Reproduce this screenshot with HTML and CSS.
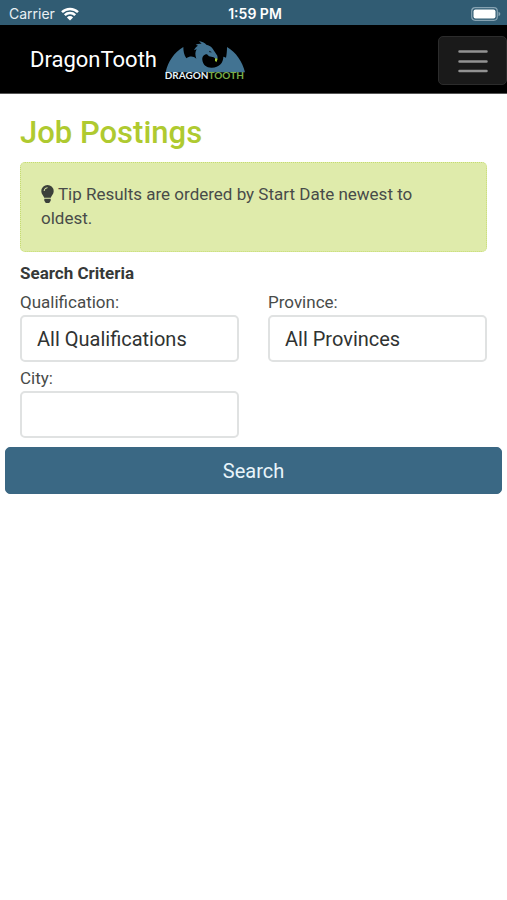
FILE: index.html
```html
<!DOCTYPE html>
<html lang="en">
<head>
<meta charset="utf-8">
<meta name="viewport" content="width=device-width, initial-scale=1">
<title>DragonTooth - Job Postings</title>
<link rel="stylesheet" href="styles.css">
</head>
<body>
<div class="status">
  <div class="carrier">
    <span>Carrier</span>
    <svg class="wifi" viewBox="0 0 18 14" aria-hidden="true">
      <path d="M1 5.200a11.400 11.400 0 0 1 16 0M3.800 8.200a7.400 7.400 0 0 1 10.400 0" fill="none" stroke="currentColor" stroke-width="2.500"/>
      <path d="M9 13.500 5.900 10.400a4.400 4.400 0 0 1 6.200 0z" fill="currentColor"/>
    </svg>
  </div>
  <span class="clock">1:59 PM</span>
  <svg class="battery" viewBox="0 0 30 14" aria-hidden="true">
    <rect x=".7" y=".7" width="25.600" height="12.600" rx="3.500" fill="none" stroke="#87a3b2" stroke-width="1.200"/>
    <rect x="2.500" y="2.500" width="22" height="9" rx="2" fill="#fff"/>
    <path d="M27.500 4.800c2.400.8 2.400 3.600 0 4.400z" fill="#87a3b2"/>
  </svg>
</div>
<header class="navbar">
  <a class="brand" href="#">
    <span>DragonTooth</span>
    <svg class="logo" viewBox="15 12 240 126" role="img" aria-label="DragonTooth logo">
      <path fill="#427392" d="M17 112C24 79 42 53 70 36C70 48 72 60 79 70C88 63 100 62 109 71C105 60 105 50 110 43L102 46C105 39 109 35 114 32L107 29C113 27 119 26 125 27L117 18C128 21 135 24 139 29C149 32 156 36 159 43L172 62L173 70L169 73L161 67L147 64L141 58C131 58 126 66 127 75C129 91 141 99 156 98C177 97 190 84 190 65C194 66 196 67 198 68C200 60 201 48 201 36C229 53 247 79 255 112Z"/>
      <path d="M147 47l9 5-7 0z" fill="#000"/>
      <path d="M165 70l8 1-4 11-4-5z" fill="#a9ce37"/>
      <text class="wordmark" x="14" y="132"><tspan fill="#e5f3fa">DRAGON</tspan><tspan fill="#79ad48">TOOTH</tspan></text>
    </svg>
  </a>
  <button class="toggler" type="button" aria-label="Toggle navigation">
    <svg viewBox="0 0 30 24" aria-hidden="true"><path d="M1.500 2.500h27M1.500 12.500h27M1.500 22h27" stroke="#929292" stroke-width="2.500" stroke-linecap="round"/></svg>
  </button>
</header>
<main>
  <h1>Job Postings</h1>
  <p class="tip"><svg class="bulb" viewBox="0 0 13 18" aria-hidden="true"><path fill="#3b403a" d="M6.500 0a6.200 6.200 0 0 1 6.200 6.200c0 3-2.300 4.200-2.900 6.600H3.200C2.600 10.400.3 9.200.3 6.200A6.200 6.200 0 0 1 6.500 0zM3.300 13.800h6.400v1.900L8.200 18H4.800l-1.500-2.300z"/><path d="M3.100 6a3.400 3.400 0 0 1 3.400-3.300" fill="none" stroke="#dfebab" stroke-width="1"/></svg> Tip Results are ordered by Start Date newest to oldest.</p>
  <form>
    <h2>Search Criteria</h2>
    <div class="fields">
      <div class="field">
        <label for="qualification">Qualification:</label>
        <select id="qualification"><option>All Qualifications</option></select>
      </div>
      <div class="field">
        <label for="province">Province:</label>
        <select id="province"><option>All Provinces</option></select>
      </div>
      <div class="field">
        <label for="city">City:</label>
        <input id="city" type="text">
      </div>
    </div>
    <button class="search" type="submit">Search</button>
  </form>
</main>
</body>
</html>
```
FILE: styles.css
```css
* {
  box-sizing: border-box;
}

body {
  margin: 0;
  background: #fff;
  color: #484b49;
  font: 17px/24px Roboto, sans-serif;
}

.status {
  display: grid;
  grid-template-columns: 1fr auto 1fr;
  align-items: center;
  height: 25px;
  padding: 2px 6px 0 9px;
  background: #315c73;
  color: #fff;
  font: 14px/20px Inter, sans-serif;
}

.carrier {
  display: flex;
  align-items: center;
  gap: 6px;
  color: #e9f0f3;
}

.wifi {
  width: 18px;
  height: 14px;
  color: #fff;
}

.clock {
  font-weight: 600;
}

.battery {
  justify-self: end;
  width: 30px;
  height: 14px;
}

.navbar {
  display: flex;
  align-items: center;
  justify-content: space-between;
  height: 69px;
  padding-left: 30px;
  border-bottom: 1px solid #555;
  background: #000;
}

.brand {
  display: flex;
  align-items: center;
  gap: 8px;
  padding-top: 2px;
  color: #fff;
  font-size: 22px;
  text-decoration: none;
}

.logo {
  width: 80px;
  height: 42px;
}

.wordmark {
  font: 700 30px Lato, sans-serif;
}

.toggler {
  display: grid;
  place-items: center;
  width: 69px;
  height: 49px;
  margin-top: 3px;
  padding: 0;
  border: 1px solid #2c2c2c;
  border-radius: 5px;
  background: #1a1a1a;
}

.toggler svg {
  width: 30px;
  height: 24px;
}

main {
  padding: 20px;
}

h1 {
  margin: 0 0 10px;
  color: #afca30;
  font-size: 31px;
  font-weight: 500;
  line-height: 38px;
}

.tip {
  margin: 0 0 9px;
  padding: 19px 20px 21px;
  border: 1px dotted #c5dc70;
  border-radius: 5px;
  background: #dfebab;
}

.bulb {
  width: 13px;
  height: 18px;
  vertical-align: -3px;
}

h2 {
  margin: 0 0 5px;
  color: #363938;
  font-size: 17px;
  font-weight: 700;
  line-height: 24px;
}

.fields {
  display: grid;
  grid-template-columns: 1fr 1fr;
  gap: 4px 29px;
}

label {
  display: block;
  line-height: 25px;
}

select,
input {
  display: block;
  width: 100%;
  height: 47px;
  padding: 0 15px;
  border: 2px solid #e0e2e2;
  border-radius: 5px;
  background: #fff;
  color: #303332;
  font: 20px/24px Roboto, sans-serif;
  appearance: none;
}

.search {
  display: block;
  width: calc(100% + 30px);
  height: 47px;
  margin: 9px -15px 0;
  border: 1px solid #3b6783;
  border-radius: 5px;
  background: #3a6884;
  color: #e8f4fa;
  font: 20px/24px Roboto, sans-serif;
}
```
